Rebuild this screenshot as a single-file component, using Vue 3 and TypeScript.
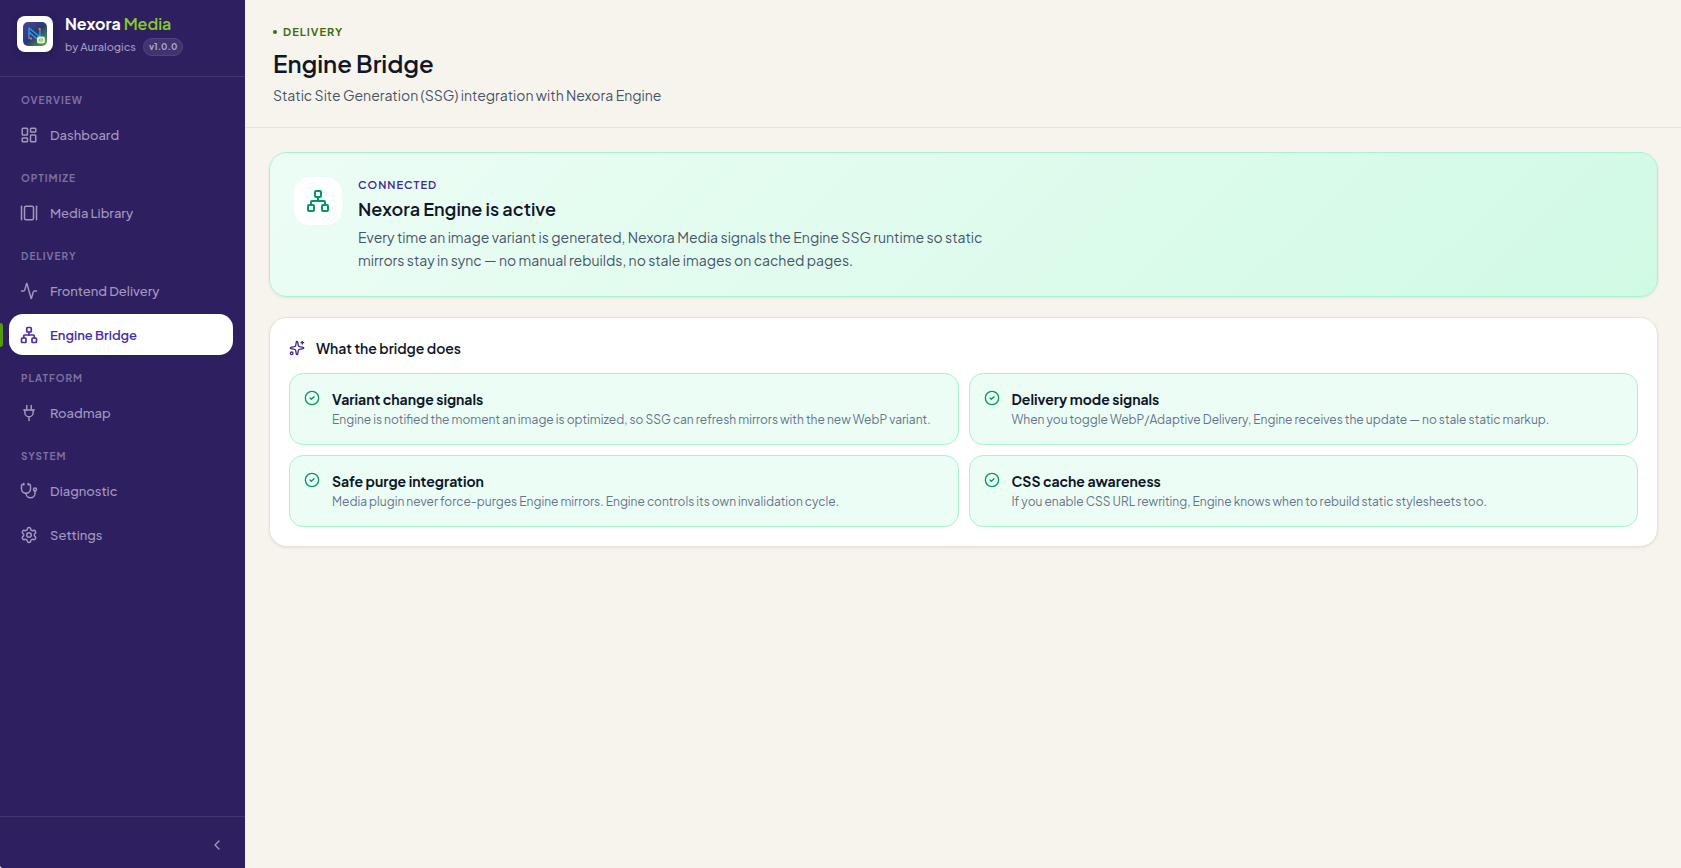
<script setup lang="ts">
interface NavItem {
  label: string
  icon: string
  active?: boolean
}
interface NavGroup {
  title: string
  items: NavItem[]
}

const icons: Record<string, string> = {
  dashboard:
    '<rect width="7" height="9" x="3" y="3" rx="1"/><rect width="7" height="5" x="14" y="3" rx="1"/><rect width="7" height="9" x="14" y="12" rx="1"/><rect width="7" height="5" x="3" y="16" rx="1"/>',
  gallery: '<path d="M2 3v18"/><rect width="12" height="18" x="6" y="3" rx="2"/><path d="M22 3v18"/>',
  activity:
    '<path d="M22 12h-2.48a2 2 0 0 0-1.93 1.46l-2.35 8.36a.25.25 0 0 1-.48 0L9.24 2.18a.25.25 0 0 0-.48 0l-2.35 8.36A2 2 0 0 1 4.49 12H2"/>',
  network:
    '<rect x="16" y="16" width="6" height="6" rx="1"/><rect x="2" y="16" width="6" height="6" rx="1"/><rect x="9" y="2" width="6" height="6" rx="1"/><path d="M5 16v-3a1 1 0 0 1 1-1h12a1 1 0 0 1 1 1v3"/><path d="M12 12V8"/>',
  plug: '<path d="M12 17v5"/><path d="M9 8V2"/><path d="M15 8V2"/><path d="M5 8h14"/><path d="M6.5 8v3.5a5.5 5.5 0 0 0 11 0V8"/>',
  stethoscope:
    '<path d="M11 2v2"/><path d="M5 2v2"/><path d="M5 3H4a2 2 0 0 0-2 2v4a6 6 0 0 0 12 0V5a2 2 0 0 0-2-2h-1"/><path d="M8 15a6 6 0 0 0 12 0v-3"/><circle cx="20" cy="10" r="2"/>',
  settings:
    '<path d="M9.671 4.136a2.34 2.34 0 0 1 4.659 0 2.34 2.34 0 0 0 3.319 1.915 2.34 2.34 0 0 1 2.33 4.033 2.34 2.34 0 0 0 0 3.831 2.34 2.34 0 0 1-2.33 4.033 2.34 2.34 0 0 0-3.319 1.915 2.34 2.34 0 0 1-4.659 0 2.34 2.34 0 0 0-3.32-1.915 2.34 2.34 0 0 1-2.33-4.033 2.34 2.34 0 0 0 0-3.831A2.34 2.34 0 0 1 6.35 6.051a2.34 2.34 0 0 0 3.319-1.915"/><circle cx="12" cy="12" r="3"/>',
}

const groups: NavGroup[] = [
  { title: 'Overview', items: [{ label: 'Dashboard', icon: 'dashboard' }] },
  { title: 'Optimize', items: [{ label: 'Media Library', icon: 'gallery' }] },
  {
    title: 'Delivery',
    items: [
      { label: 'Frontend Delivery', icon: 'activity' },
      { label: 'Engine Bridge', icon: 'network', active: true },
    ],
  },
  { title: 'Platform', items: [{ label: 'Roadmap', icon: 'plug' }] },
  {
    title: 'System',
    items: [
      { label: 'Diagnostic', icon: 'stethoscope' },
      { label: 'Settings', icon: 'settings' },
    ],
  },
]

const features = [
  {
    title: 'Variant change signals',
    text: 'Engine is notified the moment an image is optimized, so SSG can refresh mirrors with the new WebP variant.',
  },
  {
    title: 'Delivery mode signals',
    text: 'When you toggle WebP/Adaptive Delivery, Engine receives the update — no stale static markup.',
  },
  {
    title: 'Safe purge integration',
    text: 'Media plugin never force-purges Engine mirrors. Engine controls its own invalidation cycle.',
  },
  {
    title: 'CSS cache awareness',
    text: 'If you enable CSS URL rewriting, Engine knows when to rebuild static stylesheets too.',
  },
]
</script>

<template>
  <div class="app">
    <aside class="sidebar">
      <div class="brand">
        <div class="brand-logo">
          <svg viewBox="0 0 24 24" width="24" height="24" aria-hidden="true">
            <defs>
              <linearGradient id="logo-bg" x1="0" y1="0" x2="1" y2="1">
                <stop offset="0" stop-color="#4f4496" />
                <stop offset="0.5" stop-color="#283a72" />
                <stop offset="1" stop-color="#5cae45" />
              </linearGradient>
            </defs>
            <rect width="24" height="24" rx="5" fill="url(#logo-bg)" />
            <path
              d="M6 17V6l11 9V7M6 10l8 7"
              fill="none"
              stroke="#2f9be0"
              stroke-width="1.5"
              stroke-linejoin="round"
            />
            <circle cx="16.500" cy="7" r="1.200" fill="#f26a35" />
            <circle cx="8" cy="16.500" r="1.200" fill="#f26a35" />
            <rect x="14" y="14.500" width="8" height="7" rx="2" fill="#d9efcf" />
            <path d="M16.500 17h3v2h-3z" fill="none" stroke="#7bb869" stroke-width="0.800" />
          </svg>
        </div>
        <div class="brand-text">
          <div class="brand-name">Nexora <span>Media</span></div>
          <div class="brand-sub">by Auralogics <span class="version">v1.0.0</span></div>
        </div>
      </div>

      <nav class="nav" aria-label="Main">
        <section v-for="group in groups" :key="group.title" class="nav-group">
          <h2 class="nav-title">{{ group.title }}</h2>
          <a
            v-for="item in group.items"
            :key="item.label"
            href="#"
            class="nav-item"
            :class="{ active: item.active }"
            :aria-current="item.active ? 'page' : undefined"
          >
            <svg class="nav-icon" viewBox="0 0 24 24" aria-hidden="true" v-html="icons[item.icon]" />
            <span>{{ item.label }}</span>
          </a>
        </section>
      </nav>

      <div class="sidebar-foot">
        <button type="button" class="collapse" aria-label="Collapse sidebar">
          <svg viewBox="0 0 24 24" aria-hidden="true"><path d="m15 18-6-6 6-6" /></svg>
        </button>
      </div>
    </aside>

    <main class="main">
      <header class="page-head">
        <div class="eyebrow"><i class="dot"></i>Delivery</div>
        <h1>Engine Bridge</h1>
        <p>Static Site Generation (SSG) integration with Nexora Engine</p>
      </header>

      <div class="content">
        <section class="hero">
          <div class="hero-icon">
            <svg viewBox="0 0 24 24" aria-hidden="true" v-html="icons.network" />
          </div>
          <div class="hero-body">
            <div class="hero-label">Connected</div>
            <h2>Nexora Engine is active</h2>
            <p>
              Every time an image variant is generated, Nexora Media signals the Engine SSG runtime so static
              mirrors stay in sync — no manual rebuilds, no stale images on cached pages.
            </p>
          </div>
        </section>

        <section class="card">
          <h2 class="card-title">
            <svg viewBox="0 0 24 24" aria-hidden="true">
              <path
                d="M11.017 2.814a1 1 0 0 1 1.966 0l1.051 5.558a2 2 0 0 0 1.594 1.594l5.558 1.051a1 1 0 0 1 0 1.966l-5.558 1.051a2 2 0 0 0-1.594 1.594l-1.051 5.558a1 1 0 0 1-1.966 0l-1.051-5.558a2 2 0 0 0-1.594-1.594l-5.558-1.051a1 1 0 0 1 0-1.966l5.558-1.051a2 2 0 0 0 1.594-1.594z"
              />
              <path d="M20 2v4" />
              <path d="M22 4h-4" />
              <circle cx="4" cy="20" r="2" />
            </svg>
            What the bridge does
          </h2>
          <div class="features">
            <article v-for="feature in features" :key="feature.title" class="feature">
              <svg viewBox="0 0 24 24" aria-hidden="true">
                <circle cx="12" cy="12" r="10" />
                <path d="m9 12 2 2 4-4" />
              </svg>
              <div>
                <h3>{{ feature.title }}</h3>
                <p>{{ feature.text }}</p>
              </div>
            </article>
          </div>
        </section>
      </div>
    </main>
  </div>
</template>

<style>
body {
  margin: 0;
  background: #f7f4ed;
}
</style>

<style scoped>
.app {
  display: flex;
  min-height: 100vh;
  font-family: 'Plus Jakarta Sans', Inter, 'Liberation Sans', sans-serif;
  color: #0f172a;
}
h1,
h2,
h3,
p {
  margin: 0;
}
svg {
  display: block;
  flex: none;
}
.app :is(.nav-icon, .collapse svg, .hero-icon svg, .card-title svg, .feature svg) {
  fill: none;
  stroke: currentColor;
  stroke-width: 2;
  stroke-linecap: round;
  stroke-linejoin: round;
}

.sidebar {
  display: flex;
  flex-direction: column;
  flex: none;
  box-sizing: border-box;
  width: 245px;
  background: #2e1f61;
  border-bottom-left-radius: 3px;
}
.brand {
  display: flex;
  align-items: flex-start;
  gap: 12px;
  padding: 16px 17px 20px;
  border-bottom: 1px solid #433571;
}
.brand-logo {
  display: grid;
  place-items: center;
  width: 36px;
  height: 36px;
  border-radius: 8px;
  background: #fff;
  box-shadow: 0 2px 8px rgb(0 0 0 / 15%);
}
.brand-text {
  margin-top: -2px;
}
.brand-name {
  font-size: 16px;
  line-height: 20px;
  font-weight: 700;
  color: #fff;
}
.brand-name span {
  font-weight: 600;
  color: #84cc26;
}
.brand-sub {
  display: flex;
  align-items: center;
  gap: 7px;
  margin-top: 4px;
  font-size: 11px;
  line-height: 18px;
  font-weight: 500;
  color: #a29ac0;
}
.version {
  box-sizing: border-box;
  height: 18px;
  padding: 0 5px;
  border: 1px solid #51437c;
  border-radius: 9px;
  background: #413370;
  font-size: 9px;
  line-height: 16px;
  font-weight: 700;
  color: #b0a8ca;
}
.nav {
  display: flex;
  flex-direction: column;
  flex: 1;
  gap: 15px;
  padding: 15px 12px 15px 9px;
}
.nav-group {
  display: flex;
  flex-direction: column;
  gap: 3px;
}
.nav-title {
  margin-bottom: 3px;
  padding-left: 12px;
  font-size: 10px;
  line-height: 16px;
  font-weight: 700;
  letter-spacing: 1px;
  text-transform: uppercase;
  color: #7c70a1;
}
.nav-item {
  position: relative;
  display: flex;
  align-items: center;
  gap: 12px;
  height: 41px;
  padding: 0 11px;
  border-radius: 14px;
  font-size: 13px;
  font-weight: 500;
  color: #a198bf;
  text-decoration: none;
}
.app .nav-icon {
  width: 18px;
  height: 18px;
  stroke-width: 1.5;
}
.nav-item.active {
  background: #fff;
  color: #4c2fa0;
  font-weight: 600;
}
.app .nav-item.active .nav-icon {
  stroke-width: 2.25;
}
.nav-item.active::before {
  content: '';
  position: absolute;
  top: 9px;
  left: -9px;
  width: 3px;
  height: 24px;
  border-radius: 0 3px 3px 0;
  background: #58990c;
}
.sidebar-foot {
  display: flex;
  justify-content: flex-end;
  padding: 12px 12px 7px;
  border-top: 1px solid #433571;
}
.collapse {
  display: grid;
  place-items: center;
  width: 32px;
  height: 32px;
  padding: 0;
  border: 0;
  border-radius: 8px;
  background: transparent;
  color: #a198bf;
}
.collapse svg {
  width: 16px;
  height: 16px;
}

.main {
  flex: 1;
  min-width: 0;
  background: #f7f4ed;
}
.page-head {
  padding: 24px 28px 20px;
  border-bottom: 1px solid #e8e3d3;
}
.eyebrow {
  display: flex;
  align-items: center;
  gap: 6px;
  font-size: 11px;
  line-height: 16px;
  font-weight: 700;
  letter-spacing: 1px;
  text-transform: uppercase;
  color: #3f6d12;
}
.dot {
  width: 4px;
  height: 4px;
  border-radius: 50%;
  background: currentColor;
}
h1 {
  margin-top: 7px;
  font-size: 24px;
  line-height: 32px;
  font-weight: 600;
}
.page-head p {
  margin-top: 5px;
  padding-bottom: 1px;
  font-size: 14px;
  line-height: 22px;
  color: #475569;
}
.content {
  display: flex;
  flex-direction: column;
  gap: 20px;
  padding: 24px 23px 24px 24px;
}
.hero,
.card {
  border: 1px solid #e8e3d7;
  border-radius: 18px;
  background: #fff;
  box-shadow: 0 1px 3px rgb(15 23 42 / 8%);
}
.hero {
  display: flex;
  align-items: flex-start;
  gap: 16px;
  padding: 24px;
  border-color: #a7f3d0;
  background: linear-gradient(135deg, #ecfdf5, #d1fae5);
}
.hero-icon {
  display: grid;
  place-items: center;
  flex: none;
  width: 48px;
  height: 48px;
  border-radius: 16px;
  background: #fff;
  color: #059669;
}
.hero-icon svg {
  width: 24px;
  height: 24px;
}
.hero-label {
  font-size: 11px;
  line-height: 16px;
  font-weight: 600;
  letter-spacing: 1px;
  text-transform: uppercase;
  color: #432a8c;
}
.hero h2 {
  margin-top: 2px;
  font-size: 18px;
  line-height: 28px;
  font-weight: 600;
}
.hero p {
  max-width: 640px;
  margin-top: 3px;
  font-size: 14px;
  line-height: 23px;
  color: #475569;
}
.card {
  padding: 19px;
}
.card-title {
  display: flex;
  align-items: center;
  gap: 11px;
  font-size: 14px;
  line-height: 22px;
  font-weight: 600;
}
.card-title svg {
  width: 16px;
  height: 16px;
  color: #432a8c;
}
.features {
  display: grid;
  grid-template-columns: 1fr 1fr;
  gap: 10px;
  margin-top: 14px;
}
.feature {
  display: flex;
  align-items: flex-start;
  gap: 12px;
  padding: 14px;
  border: 1px solid #a7f3d0;
  border-radius: 14px;
  background: #ecfdf5;
}
.feature svg {
  width: 16px;
  height: 16px;
  margin-top: 2px;
  color: #059669;
}
.feature h3 {
  font-size: 14px;
  line-height: 22px;
  font-weight: 700;
}
.feature p {
  font-size: 12px;
  line-height: 20px;
  color: #64748b;
}
</style>
